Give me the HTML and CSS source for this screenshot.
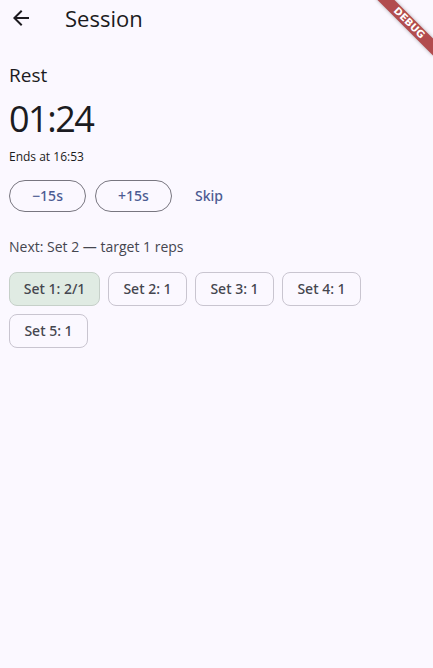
FILE: index.html
```html
<!DOCTYPE html>
<html lang="en">
<head>
<meta charset="utf-8">
<title>Session</title>
<link rel="stylesheet" href="styles.css">
</head>
<body>
<div class="app">
  <header class="appbar">
    <button class="back" aria-label="Back">
      <svg width="24" height="24" viewBox="0 0 24 24"><path d="M20 11H7.83l5.59-5.59L12 4l-8 8 8 8 1.41-1.41L7.83 13H20v-2z" fill="#1d1b20"/></svg>
    </button>
    <h1 class="title">Session</h1>
  </header>
  <main class="content">
    <div class="phase">Rest</div>
    <div class="timer">01:24</div>
    <div class="ends">Ends at 16:53</div>
    <div class="actions">
      <button class="outlined">−15s</button>
      <button class="outlined">+15s</button>
      <button class="text-btn">Skip</button>
    </div>
    <div class="next">Next: Set 2 — target 1 reps</div>
    <div class="chips">
      <span class="chip selected">Set 1: 2/1</span>
      <span class="chip">Set 2: 1</span>
      <span class="chip">Set 3: 1</span>
      <span class="chip">Set 4: 1</span>
      <span class="chip">Set 5: 1</span>
    </div>
  </main>
  <div class="debug"><span>DEBUG</span></div>
</div>
</body>
</html>
```
FILE: styles.css
```css
* { box-sizing: border-box; }
html, body { margin: 0; padding: 0; }
body {
  background: #fbf8ff;
  font-family: "Open Sans", "Noto Sans", sans-serif;
  color: #1b1b21;
  width: 433px;
  height: 668px;
  overflow: hidden;
}
.app { position: relative; width: 433px; height: 668px; overflow: hidden; }
.appbar {
  height: 35px;
  display: flex;
  align-items: center;
}
.back {
  border: 0;
  background: none;
  padding: 0;
  margin-left: 9px;
  width: 24px;
  height: 24px;
  display: flex;
}
.title {
  margin: 0 0 0 32px;
  font-size: 22px;
  font-weight: 400;
  line-height: 30px;
  color: #1b1b21;
}
.content {
  padding: 27px 9px 0 9px;
}
.phase {
  font-size: 19px;
  line-height: 26px;
  color: #1b1b21;
}
.timer {
  margin-top: 9px;
  font-size: 36px;
  line-height: 44px;
  color: #1b1b21;
  letter-spacing: -1.5px;
}
.ends {
  margin-top: 7.6px;
  font-size: 12px;
  line-height: 16px;
  color: #1b1b21;
}
.actions {
  margin-top: 15.4px;
  display: flex;
  align-items: center;
  gap: 9px;
}
.outlined {
  width: 77px;
  height: 32px;
  border: 1px solid #787680;
  border-radius: 16px;
  background: transparent;
  font-family: "Noto Sans", "Open Sans", sans-serif;
  font-size: 14px;
  font-weight: 500;
  color: #4c5b92;
  padding: 0;
}
.text-btn {
  height: 32px;
  border: 0;
  background: transparent;
  font-family: "Noto Sans", "Open Sans", sans-serif;
  font-size: 14px;
  font-weight: 500;
  color: #4c5b92;
  padding: 0 12px;
  margin-left: 2px;
}
.next {
  margin-top: 24.6px;
  font-size: 14px;
  line-height: 20px;
  color: #45464f;
}
.chips {
  margin-top: 15.4px;
  display: flex;
  flex-wrap: wrap;
  gap: 8px;
  width: 360px;
}
.chip {
  height: 34px;
  display: flex;
  align-items: center;
  justify-content: center;
  width: 79px;
  border: 1px solid #c9c5d0;
  border-radius: 8px;
  font-family: "Noto Sans", "Open Sans", sans-serif;
  font-size: 14px;
  font-weight: 500;
  color: #45464f;
}
.chip.selected {
  width: 91px;
  background: #e0ebe3;
  border-color: #c6d0c9;
}
.debug {
  position: absolute;
  top: 17px;
  right: -16px;
  width: 80px;
  height: 12px;
  transform: rotate(45deg);
  background: #b24c4e;
  box-shadow: 0 0 4px rgba(0,0,0,0.3);
  display: flex;
  align-items: center;
  justify-content: center;
}
.debug span {
  font-family: "DejaVu Sans", sans-serif;
  font-weight: 700;
  font-size: 10px;
  line-height: 12px;
  color: #fff;
}
```
